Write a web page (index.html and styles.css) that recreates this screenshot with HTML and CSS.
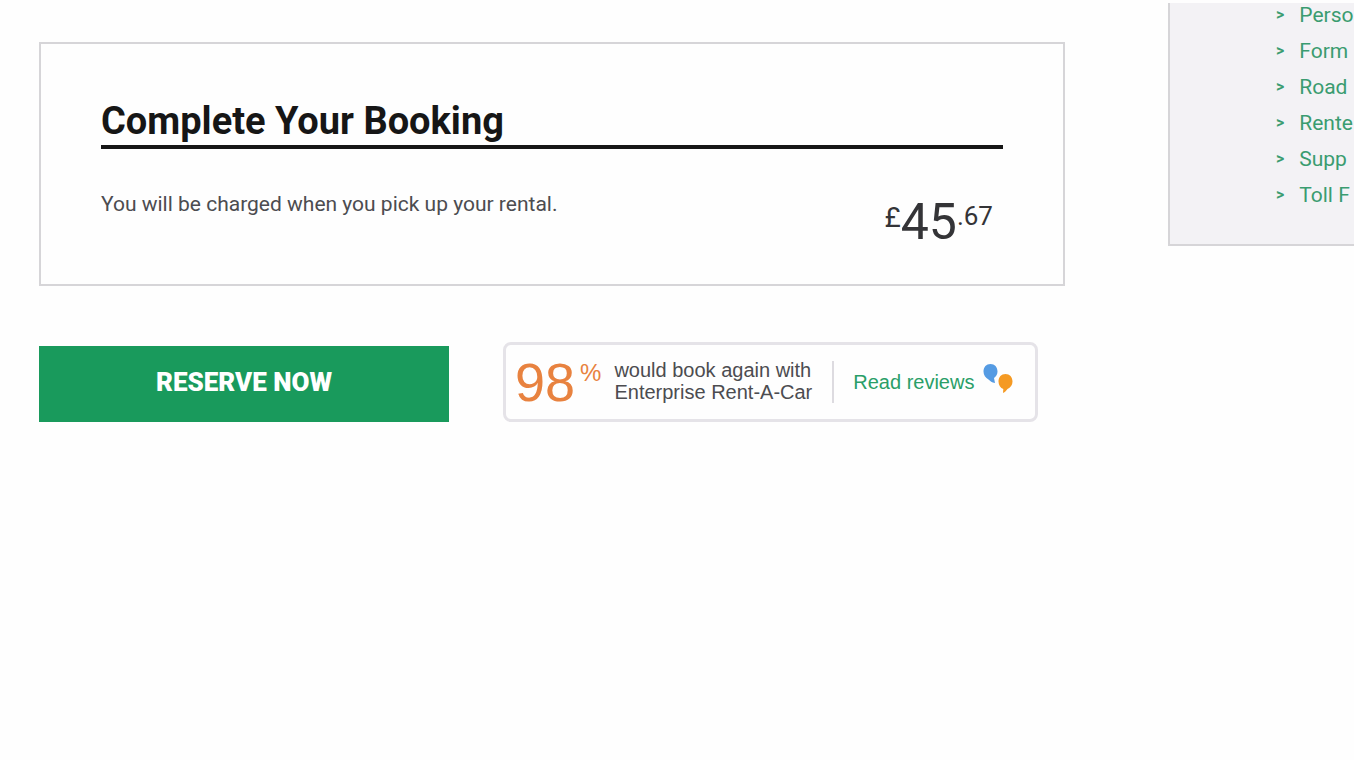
FILE: index.html
```html
<!DOCTYPE html>
<html lang="en-GB">
<head>
<meta charset="utf-8">
<meta name="viewport" content="width=device-width, initial-scale=1">
<title>Complete Your Booking</title>
<link rel="stylesheet" href="styles.css">
</head>
<body>
<div class="page">
  <main class="main">
    <section class="card" aria-labelledby="booking-title">
      <h1 class="card-title" id="booking-title">Complete Your Booking</h1>
      <div class="card-body">
        <p class="note">You will be charged when you pick up your rental.</p>
        <p class="price"><span class="currency">£</span><span class="pounds">45</span><span class="pence">.67</span></p>
      </div>
    </section>
    <div class="actions">
      <button class="reserve" type="button">RESERVE NOW</button>
      <div class="reviews">
        <p class="score">98<span class="percent">%</span></p>
        <p class="claim">would book again with<br>Enterprise Rent-A-Car</p>
        <a class="read" href="#reviews">Read reviews
          <svg class="logo" viewBox="0 0 30 30" width="30" height="30" aria-hidden="true">
            <path class="blue" d="M7.5 0C11.7 0 14.5 3 14.5 7.500C14.5 10.500 13 12.500 11 14L12 19C9 18.500 7 17 5.500 15.500C2.500 14 0.500 11 0.500 7.500C0.500 3 3.300 0 7.500 0Z"/>
            <path class="orange" d="M22.500 10C26.700 10 29.500 13 29.500 17.500C29.500 21 27.500 23.800 24.500 25C23.500 26.500 22 28 20 29L20.300 25C17.500 24 15.500 21 15.500 17.500C15.500 13 18.300 10 22.500 10Z"/>
          </svg>
        </a>
      </div>
    </div>
  </main>
  <aside class="sidebar">
    <ul class="links">
      <li><a href="#personal">Perso</a></li>
      <li><a href="#forms">Form</a></li>
      <li><a href="#road">Road</a></li>
      <li><a href="#renter">Rente</a></li>
      <li><a href="#supplemental">Supp</a></li>
      <li><a href="#toll">Toll F</a></li>
    </ul>
  </aside>
</div>
</body>
</html>
```
FILE: styles.css
```css
* { box-sizing: border-box; }

body {
  margin: 0;
  background: #fefefe;
  color: #4c4c50;
  font-family: Roboto, "Liberation Sans", sans-serif;
  overflow-x: hidden;
}

h1, p, ul { margin: 0; padding: 0; }

.page {
  display: grid;
  grid-template-columns: minmax(0, 1fr) 186px;
  column-gap: 103px;
  align-items: start;
  padding: 3px 0 0 39px;
}

.main { padding-top: 39px; }

.card {
  padding: 56px 60px 36px;
  border: 2px solid #d6d5d8;
}

.card-title {
  padding-bottom: 3px;
  border-bottom: 4px solid #161616;
  color: #161616;
  font-size: 38px;
  line-height: 42px;
  font-weight: 700;
}

.card-body {
  display: flex;
  justify-content: space-between;
  gap: 24px;
  padding: 43px 10px 0 0;
}

.note {
  font-size: 21px;
  line-height: 24px;
}

.price {
  display: flex;
  align-items: flex-start;
  padding-top: 4px;
  color: #343437;
}

.pounds {
  font-size: 50px;
  line-height: 52px;
}

.currency {
  font-size: 28px;
  line-height: 44px;
}

.pence {
  font-size: 26px;
  line-height: 40px;
}

.actions {
  display: flex;
  align-items: center;
  gap: 54px;
  padding-top: 56px;
}

.reserve {
  flex: 0 1 410px;
  height: 76px;
  margin-top: 4px;
  padding: 0 0 4px;
  border: 0;
  background: #199a5c;
  color: #fff;
  font-family: inherit;
  font-size: 26px;
  font-weight: 900;
}

.reviews {
  display: flex;
  align-items: center;
  flex: 0 0 auto;
  height: 80px;
  padding: 0 22px 0 9px;
  border: 3px solid #e5e3e8;
  border-radius: 8px;
  font-family: "Liberation Sans", Arial, sans-serif;
  white-space: nowrap;
}

.score {
  display: flex;
  gap: 5px;
  color: #e8823f;
  font-size: 54px;
  line-height: 54px;
}

.percent {
  font-size: 24px;
  line-height: 36px;
}

.claim {
  padding: 0 20px 2px 13px;
  font-size: 20px;
  line-height: 22px;
}

.read {
  display: flex;
  align-items: center;
  gap: 9px;
  height: 42px;
  padding-left: 19px;
  border-left: 2px solid #dddbe0;
  color: #2a9e68;
  font-size: 20px;
  text-decoration: none;
}

.logo { margin-bottom: 6px; }
.blue { fill: #559be3; }
.orange { fill: #f59a23; }

.sidebar {
  padding: 0 0 37px 106px;
  border: solid #d6d5d8;
  border-width: 0 0 2px 2px;
  background: #f3f2f5;
}

.links {
  display: grid;
  row-gap: 12px;
  list-style: none;
  white-space: nowrap;
}

.links a {
  display: flex;
  gap: 15px;
  color: #3a9c70;
  font-size: 21px;
  line-height: 24px;
  text-decoration: none;
}

.links a::before {
  content: ">";
  font-size: 16px;
  font-weight: 700;
}
```
